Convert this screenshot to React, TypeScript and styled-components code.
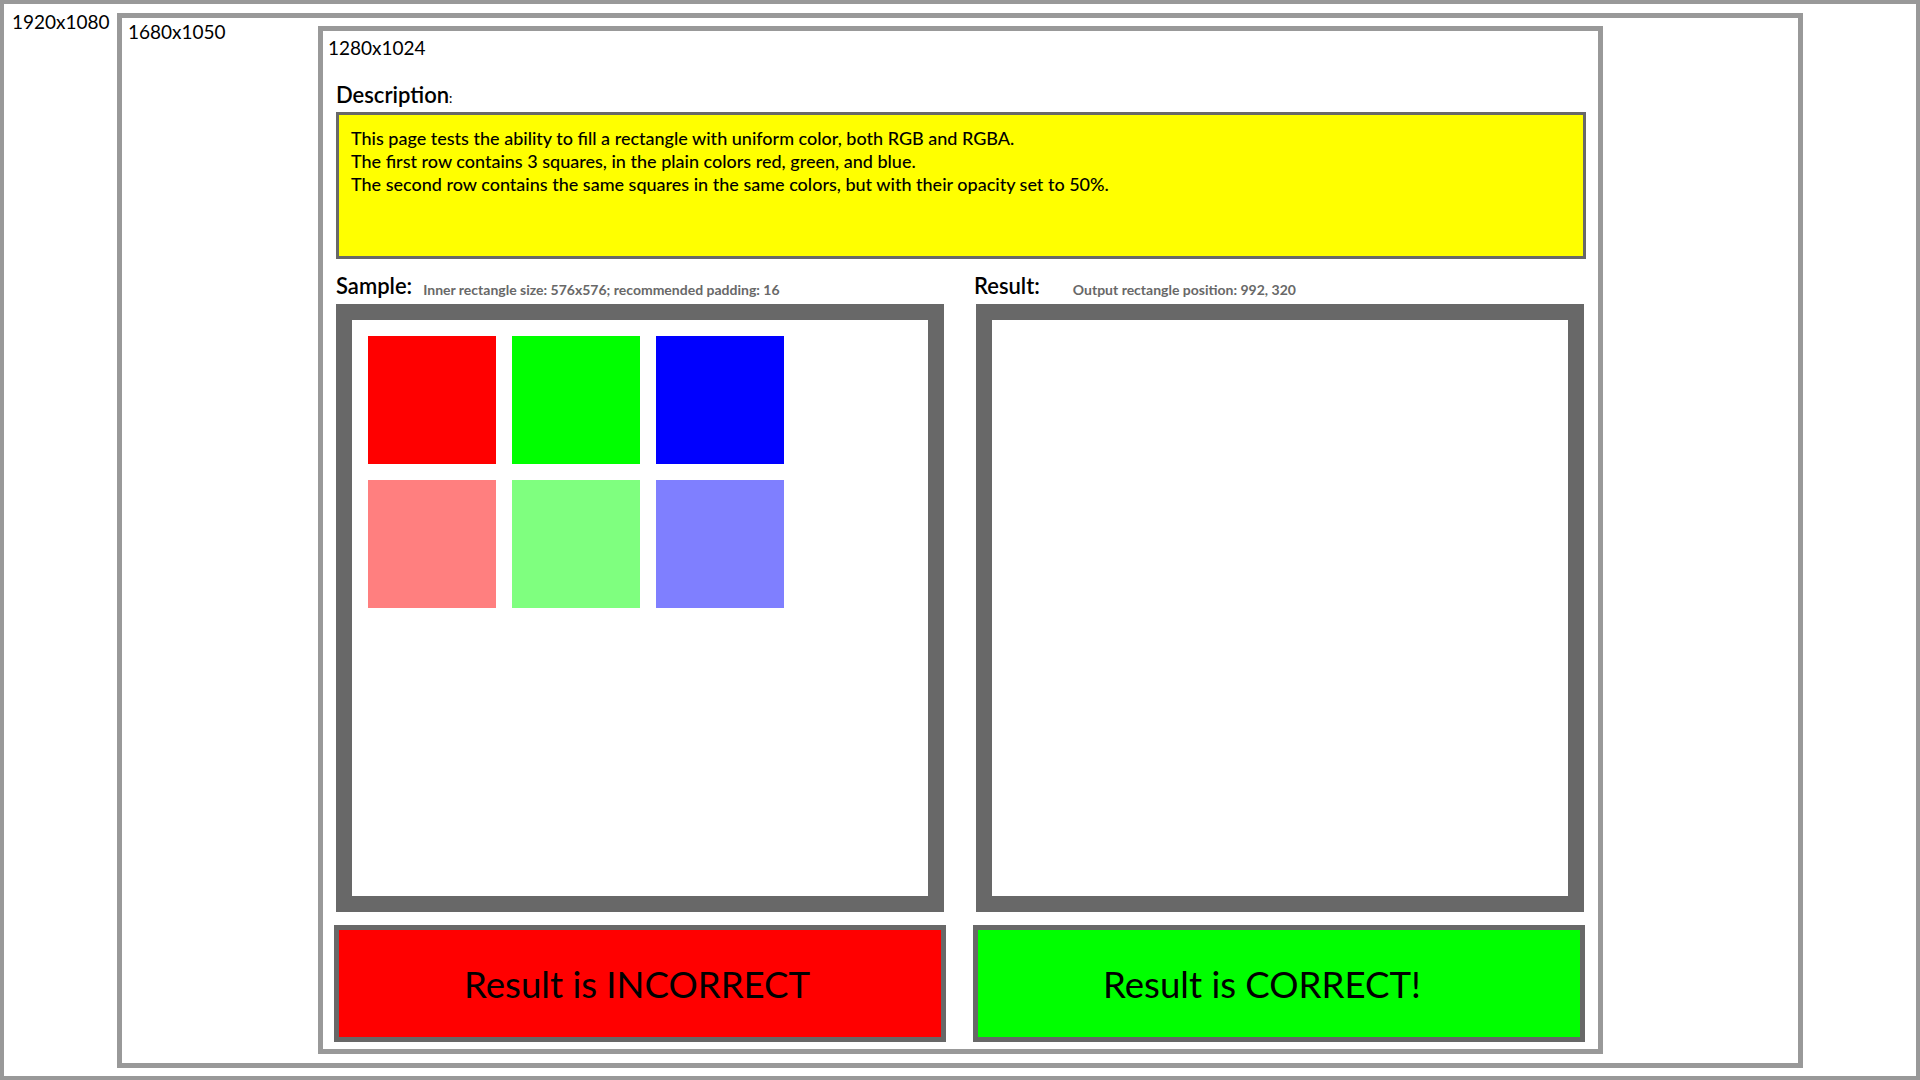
import React from "react";
import styled, { createGlobalStyle } from "styled-components";

const GlobalStyle = createGlobalStyle`
  html, body { margin: 0; padding: 0; background: #ffffff; }
  body { font-family: Lato, "Open Sans", "DejaVu Sans", sans-serif; color: #000; }
  *, *::before, *::after { box-sizing: border-box; }
`;

const Screen = styled.div<{ $w: number; $h: number; $bw: number; $lead: number; $pt: number }>`
  width: ${(p) => p.$w}px;
  height: ${(p) => p.$h}px;
  border: ${(p) => p.$bw}px solid #999999;
  background: #ffffff;
  display: grid;
  grid-template-columns: ${(p) => p.$lead}px auto 1fr;
  align-items: start;
  padding-top: ${(p) => p.$pt}px;
`;

const SizeLabel = styled.div<{ $left: number; $top?: number }>`
  grid-column: 1;
  grid-row: 1;
  padding-left: ${(p) => p.$left}px;
  margin-top: ${(p) => p.$top ?? 0}px;
  font-size: 19px;
  line-height: 18px;
  white-space: nowrap;
`;

const Slot = styled.div<{ $top?: number }>`
  grid-column: 2;
  grid-row: 1;
  margin-top: ${(p) => p.$top ?? 0}px;
`;

const TestWindow = styled.div`
  width: 1285px;
  height: 1028px;
  border: 5px solid #999999;
  background: #ffffff;
  display: flex;
  flex-direction: column;
  padding-top: 8px;
`;

const WindowLabel = styled.div`
  padding-left: 5px;
  font-size: 19px;
  line-height: 18px;
`;

const Content = styled.div`
  padding: 0 12px 0 13px;
  display: flex;
  flex-direction: column;
`;

const Heading = styled.h2`
  margin: 27px 0 0 0;
  height: 22px;
  font-size: 22px;
  line-height: 22px;
  font-weight: 600;
`;

const SmallColon = styled.span`
  font-size: 13px;
  line-height: 0;
`;

const DescriptionBox = styled.div`
  margin-top: 6px;
  height: 147px;
  border: 3px solid #686868;
  background: #ffff00;
  padding: 12px 12px;
  font-size: 18px;
  line-height: 23px;
  font-weight: 500;
`;

const Panels = styled.div`
  margin-top: 11px;
  display: grid;
  grid-template-columns: 608px 608px;
  column-gap: 32px;
`;

const Panel = styled.section`
  display: flex;
  flex-direction: column;
`;

const PanelHead = styled.div<{ $shift: number }>`
  height: 30px;
  line-height: 32px;
  font-size: 22px;
  font-weight: 600;
  margin-left: ${(p) => p.$shift}px;
  white-space: nowrap;
`;

const Caption = styled.span<{ $gap: number }>`
  margin-left: ${(p) => p.$gap}px;
  font-size: 14px;
  line-height: 0;
  font-weight: 700;
  color: #686868;
  vertical-align: -1px;
`;

const Frame = styled.div`
  margin-top: 4px;
  width: 608px;
  height: 608px;
  border: 16px solid #686868;
  background: #ffffff;
  padding: 16px;
`;

const SquareGrid = styled.div`
  display: grid;
  grid-template-columns: repeat(3, 128px);
  grid-auto-rows: 128px;
  gap: 16px;
`;

const Square = styled.div<{ $color: string }>`
  background: ${(p) => p.$color};
`;

const Buttons = styled.div`
  margin-top: 13px;
  margin-left: -2px;
  display: grid;
  grid-template-columns: 612px 612px;
  column-gap: 27px;
`;

const Verdict = styled.div<{ $bg: string }>`
  height: 117px;
  border: 5px solid #686868;
  background: ${(p) => p.$bg};
  display: flex;
  align-items: center;
  padding-left: 125px;
  font-size: 36.6px;
  line-height: 40px;
  white-space: nowrap;
`;

const squares = [
  "#ff0000",
  "#00ff00",
  "#0000ff",
  "rgba(255,0,0,0.5)",
  "rgba(0,255,0,0.5)",
  "rgba(0,0,255,0.5)",
];

export default function App() {
  return (
    <>
      <GlobalStyle />
      <Screen $w={1920} $h={1080} $bw={4} $lead={113} $pt={9}>
        <SizeLabel $left={8}>1920x1080</SizeLabel>
        <Slot>
          <Screen $w={1686} $h={1055} $bw={5} $lead={196} $pt={5}>
            <SizeLabel $left={6}>1680x1050</SizeLabel>
            <Slot $top={3}>
              <TestWindow>
                <WindowLabel>1280x1024</WindowLabel>
                <Content>
                  <Heading>
                    Description<SmallColon>:</SmallColon>
                  </Heading>
                  <DescriptionBox>
                    This page tests the ability to fill a rectangle with uniform color, both RGB and RGBA.
                    <br />
                    The first row contains 3 squares, in the plain colors red, green, and blue.
                    <br />
                    The second row contains the same squares in the same colors, but with their opacity set to 50%.
                  </DescriptionBox>
                  <Panels>
                    <Panel>
                      <PanelHead $shift={0}>
                        Sample:
                        <Caption $gap={11}>Inner rectangle size: 576x576; recommended padding: 16</Caption>
                      </PanelHead>
                      <Frame>
                        <SquareGrid>
                          {squares.map((c, i) => (
                            <Square key={i} $color={c} />
                          ))}
                        </SquareGrid>
                      </Frame>
                    </Panel>
                    <Panel>
                      <PanelHead $shift={-2}>
                        Result:
                        <Caption $gap={33}>Output rectangle position: 992, 320</Caption>
                      </PanelHead>
                      <Frame />
                    </Panel>
                  </Panels>
                  <Buttons>
                    <Verdict $bg="#ff0000">Result is INCORRECT</Verdict>
                    <Verdict $bg="#00ff00">Result is CORRECT!</Verdict>
                  </Buttons>
                </Content>
              </TestWindow>
            </Slot>
          </Screen>
        </Slot>
      </Screen>
    </>
  );
}
